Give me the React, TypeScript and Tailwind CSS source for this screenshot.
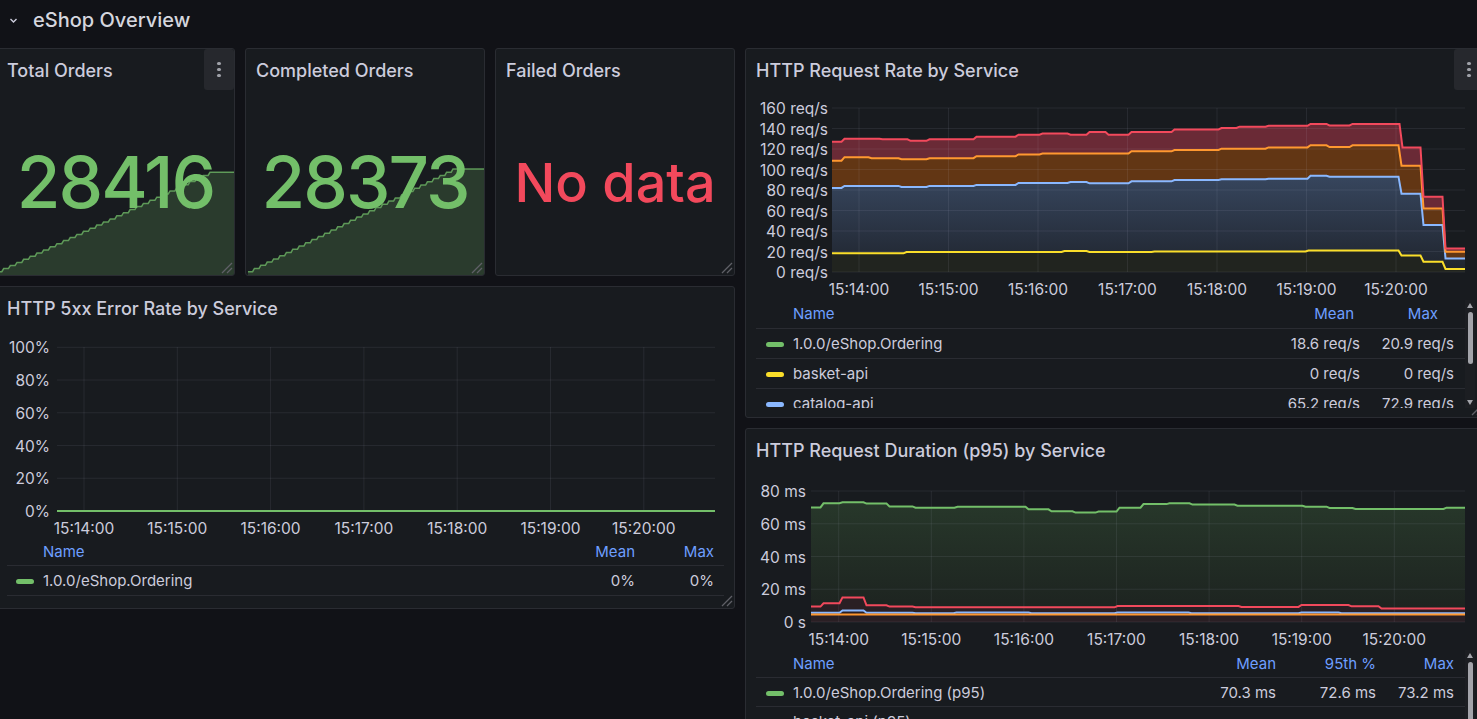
import React from "react";

const RED = "#f2495c";
const ORANGE = "#ff9830";
const BLUE = "#8ab8ff";
const YELLOW = "#fade2a";
const GREEN = "#73bf69";
const GRID = "rgba(204,204,220,0.09)";
const AXIS_FS = 15.5;

type Seg = [number, number];

// step-like line through breakpoints [x, value]
function stepLine(segs: Seg[], xEnd: number, toY: (v: number) => number, t = 1.5) {
    let d = "";
    segs.forEach(([x, v], i) => {
        const next = i < segs.length - 1 ? segs[i + 1][0] : xEnd;
        const y = toY(v).toFixed(1);
        const xa = i === 0 ? x : x + t;
        const xb = i === segs.length - 1 ? next : next - t;
        d += (i === 0 ? `M${xa},${y}` : ` L${xa},${y}`) + ` L${xb},${y}`;
    });
    return d;
}

function areaPath(segs: Seg[], xEnd: number, toY: (v: number) => number, base: number) {
    return stepLine(segs, xEnd, toY) + ` L${xEnd},${base} L${segs[0][0]},${base} Z`;
}

function sparkPath(xs: number, xr: number, yb: number, yt: number, n: number) {
    const dx = (xr - xs) / n;
    const dy = (yb - yt) / n;
    let d = `M${xs},${yb}`;
    for (let i = 0; i < n; i++) {
        const x = xs + i * dx;
        const y = yb - i * dy;
        d += ` L${(x + dx * 0.72).toFixed(1)},${y.toFixed(1)} L${(x + dx).toFixed(1)},${(y - dy).toFixed(1)}`;
    }
    return d;
}

function Dots() {
    return (
        <div className="absolute top-0 right-0 flex h-[41px] w-[30px] flex-col items-center justify-center gap-[2.5px] rounded-[3px] bg-[#26282d]">
            <span className="h-[3.5px] w-[3.5px] rounded-full bg-[#9fa1a8]" />
            <span className="h-[3.5px] w-[3.5px] rounded-full bg-[#9fa1a8]" />
            <span className="h-[3.5px] w-[3.5px] rounded-full bg-[#9fa1a8]" />
        </div>
    );
}

function ResizeHandle() {
    return (
        <svg className="absolute right-[1px] bottom-[1px]" width="12" height="12" viewBox="0 0 12 12">
            <path d="M11 1 L1 11 M11 6 L6 11" stroke="#5f6067" strokeWidth="1.3" fill="none" />
        </svg>
    );
}

function Panel({
    title,
    className,
    menu,
    handle = true,
    children,
}: {
    title: string;
    className: string;
    menu?: boolean;
    handle?: boolean;
    children: React.ReactNode;
}) {
    return (
        <div className={`relative flex shrink-0 flex-col overflow-hidden rounded-[3px] border border-[#2a2c32] bg-[#181b1f] ${className}`}>
            <div className="flex h-[41px] shrink-0 items-center px-[10px] pt-[2px] text-[18px] font-medium text-[#ccccdc]">{title}</div>
            {menu && <Dots />}
            {children}
            {handle && <ResizeHandle />}
        </div>
    );
}

function StatPanel({
    title,
    value,
    className,
    menu,
    spark,
}: {
    title: string;
    value: string;
    className: string;
    menu?: boolean;
    spark?: { vb: string; xs: number; xr: number; xe: number; yt: number };
}) {
    const noData = value === "No data";
    return (
        <Panel title={title} className={className} menu={menu}>
            <div className="relative flex flex-1 items-center justify-center">
                {spark && (
                    <svg className="absolute inset-0" width="100%" height="100%" viewBox={spark.vb} preserveAspectRatio="none">
                        <path
                            d={sparkPath(spark.xs, spark.xr, 271.7, spark.yt, 32) + ` L${spark.xe},${spark.yt} L${spark.xe},276 L${spark.xs},276 Z`}
                            fill="rgba(115,191,105,0.2)"
                        />
                        <path
                            d={sparkPath(spark.xs, spark.xr, 271.7, spark.yt, 32) + ` L${spark.xe},${spark.yt}`}
                            fill="none"
                            stroke={GREEN}
                            strokeOpacity="0.75"
                            strokeWidth="1.5"
                        />
                    </svg>
                )}
                <span
                    className={
                        noData
                            ? "relative text-[54px] leading-none font-medium text-[#f2495c]"
                            : "relative text-[71px] leading-none font-medium tracking-[-2px] text-[#73bf69]"
                    }
                >
                    {value}
                </span>
            </div>
        </Panel>
    );
}

function Swatch({ color }: { color: string }) {
    return <span className="block h-[5px] w-[18px] shrink-0 rounded-full" style={{ backgroundColor: color }} />;
}

function Scrollbar({ thumbTop, thumbH }: { thumbTop: number; thumbH: number }) {
    return (
        <div className="relative w-[10px] shrink-0 bg-[#1c1e22]">
            <svg className="absolute top-[3px] left-[2px]" width="6" height="5" viewBox="0 0 6 5">
                <path d="M3 0 L6 5 L0 5 Z" fill="#a3a4aa" />
            </svg>
            <div className="absolute left-[2.5px] w-[5.5px] rounded-full bg-[#a3a4aa]" style={{ top: thumbTop, height: thumbH }} />
            <svg className="absolute bottom-[3px] left-[2px]" width="6" height="5" viewBox="0 0 6 5">
                <path d="M0 0 L6 0 L3 5 Z" fill="#a3a4aa" />
            </svg>
        </div>
    );
}

function AxisText({ x, y, anchor, children }: { x: number; y: number; anchor: "end" | "middle"; children: React.ReactNode }) {
    return (
        <text x={x} y={y + 1.8} textAnchor={anchor} dominantBaseline="middle" fontSize={AXIS_FS} fill="#ccccdc">
            {children}
        </text>
    );
}

const rateY = (v: number) => 272 - v * 1.025;

const rateRed: Seg[] = [
    [832, 127], [843, 130], [881, 129.5], [909, 128], [928, 129.5], [975, 132], [1017, 134], [1041, 135],
    [1069, 134], [1088, 136.6], [1107, 134], [1130, 136.6], [1173, 139], [1220, 140.5], [1238, 141.8],
    [1267, 142.6], [1309, 144.5], [1328, 143], [1351, 144.5], [1401, 121.5], [1422, 73.5], [1444, 23],
];
const rateOrange: Seg[] = [
    [832, 108.6], [843, 112], [870, 111], [900, 110], [928, 111], [975, 113], [1017, 114.6], [1041, 115.5],
    [1130, 117.8], [1173, 119], [1220, 120.3], [1267, 121.6], [1309, 123.6], [1328, 122], [1351, 123.6],
    [1400, 103.7], [1422, 62], [1444, 19.8],
];
const rateBlue: Seg[] = [
    [832, 82], [843, 84], [900, 83], [928, 84], [975, 85], [1017, 86.8], [1069, 87.8], [1088, 86.5],
    [1130, 88.5], [1173, 89.8], [1220, 90.4], [1267, 91], [1309, 94], [1328, 93], [1400, 76.4], [1422, 45.8],
    [1444, 13.3],
];
const rateYellow: Seg[] = [
    [832, 18.2], [905, 19.5], [1063, 20.5], [1088, 19.5], [1153, 20], [1307, 21], [1400, 16], [1422, 10], [1444, 3],
];

const times = ["15:14:00", "15:15:00", "15:16:00", "15:17:00", "15:18:00", "15:19:00", "15:20:00"];

function RateChart() {
    const ticks = times.map((_, i) => 859 + i * 89.5);
    return (
        <svg width="738" height="210" viewBox="746 90 738 210" className="shrink-0">
            <defs>
                <linearGradient id="blueFill" gradientUnits="userSpaceOnUse" x1="0" y1="176" x2="0" y2="272">
                    <stop offset="0" stopColor="#37465e" />
                    <stop offset="1" stopColor="#1f242d" />
                </linearGradient>
            </defs>
            <path d={areaPath(rateRed, 1465, rateY, 272)} fill="#6a2a36" />
            <path d={areaPath(rateOrange, 1465, rateY, 272)} fill="#623614" />
            <path d={areaPath(rateBlue, 1465, rateY, 272)} fill="url(#blueFill)" />
            <path d={areaPath(rateYellow, 1465, rateY, 272)} fill="#21241f" />
            {[0, 20, 40, 60, 80, 100, 120, 140, 160].map((v) => (
                <g key={v}>
                    <line x1="832" x2="1465" y1={rateY(v)} y2={rateY(v)} stroke={GRID} />
                    <AxisText x={828} y={rateY(v)} anchor="end">
                        {v} req/s
                    </AxisText>
                </g>
            ))}
            {ticks.map((x, i) => (
                <g key={x}>
                    <line x1={x} x2={x} y1="108" y2="272" stroke={GRID} />
                    <AxisText x={x} y={289} anchor="middle">
                        {times[i]}
                    </AxisText>
                </g>
            ))}
            <path d={stepLine(rateYellow, 1465, rateY)} fill="none" stroke={YELLOW} strokeWidth="2" />
            <path d={stepLine(rateBlue, 1465, rateY)} fill="none" stroke={BLUE} strokeWidth="2" />
            <path d={stepLine(rateOrange, 1465, rateY)} fill="none" stroke={ORANGE} strokeWidth="2" />
            <path d={stepLine(rateRed, 1465, rateY)} fill="none" stroke={RED} strokeWidth="2" />
        </svg>
    );
}

const durY = (v: number) => 622 - v * 1.6375;

const durGreen: Seg[] = [
    [811, 70], [822, 72.5], [841, 73.1], [865, 72.3], [888, 70.6], [914, 69.8], [956, 70.4], [1027, 68.8],
    [1050, 67.6], [1074, 66.8], [1097, 67.4], [1118, 69.8], [1142, 72], [1168, 72.5], [1191, 71.7], [1236, 71],
    [1304, 70.4], [1328, 69.6], [1354, 69], [1445, 69.8],
];
const durRed: Seg[] = [
    [811, 9.4], [822, 11.4], [841, 15], [865, 10.2], [888, 9.4], [914, 9], [1116, 9.8], [1240, 9.2], [1300, 10.4],
    [1350, 9.6], [1380, 8.2],
];
const durBlue: Seg[] = [
    [811, 5.7], [841, 7], [865, 5.7], [914, 5.3], [955, 5.8], [1030, 5.3], [1116, 5.8], [1190, 5.3], [1300, 5.8],
    [1340, 5.3],
];
const durOrange: Seg[] = [[811, 4.5]];

function DurationChart() {
    const ticks = times.map((_, i) => 838.7 + i * 92.6);
    return (
        <svg width="738" height="180" viewBox="746 470 738 180" className="shrink-0">
            <defs>
                <linearGradient id="greenFill" gradientUnits="userSpaceOnUse" x1="0" y1="505" x2="0" y2="622">
                    <stop offset="0" stopColor="#27372a" />
                    <stop offset="1" stopColor="#1c211f" />
                </linearGradient>
            </defs>
            <path d={areaPath(durGreen, 1465, durY, 622)} fill="url(#greenFill)" />
            <path d={areaPath(durRed, 1465, durY, 622)} fill="#2a1f24" />
            {[0, 20, 40, 60, 80].map((v) => (
                <g key={v}>
                    <line x1="811" x2="1465" y1={durY(v)} y2={durY(v)} stroke={GRID} />
                    <AxisText x={806} y={durY(v)} anchor="end">
                        {v === 0 ? "0 s" : `${v} ms`}
                    </AxisText>
                </g>
            ))}
            {ticks.map((x, i) => (
                <g key={x}>
                    <line x1={x} x2={x} y1="491" y2="622" stroke={GRID} />
                    <AxisText x={x} y={639} anchor="middle">
                        {times[i]}
                    </AxisText>
                </g>
            ))}
            <path d={stepLine(durBlue, 1465, durY)} fill="none" stroke={BLUE} strokeWidth="2" />
            <path d={stepLine(durOrange, 1465, durY)} fill="none" stroke={ORANGE} strokeWidth="2" />
            <path d={stepLine(durRed, 1465, durY)} fill="none" stroke={RED} strokeWidth="2" />
            <path d={stepLine(durGreen, 1465, durY)} fill="none" stroke={GREEN} strokeWidth="2" />
        </svg>
    );
}

function ErrorChart() {
    const ticks = times.map((_, i) => 84 + i * 93.3);
    const y = (v: number) => 511 - v * 1.637;
    return (
        <svg width="737" height="212" viewBox="-3 328 737 212" className="shrink-0">
            {[0, 20, 40, 60, 80, 100].map((v) => (
                <g key={v}>
                    <line x1="57" x2="715" y1={y(v)} y2={y(v)} stroke={GRID} />
                    <AxisText x={50} y={y(v)} anchor="end">
                        {v}%
                    </AxisText>
                </g>
            ))}
            {ticks.map((x, i) => (
                <g key={x}>
                    <line x1={x} x2={x} y1="347" y2="511" stroke={GRID} />
                    <AxisText x={x} y={528} anchor="middle">
                        {times[i]}
                    </AxisText>
                </g>
            ))}
            <line x1="57" x2="715" y1="511" y2="511" stroke={GREEN} strokeWidth="2" />
        </svg>
    );
}

export default function App() {
    return (
        <div className="h-[719px] w-[1477px] overflow-hidden bg-[#111217] font-[Inter,sans-serif] text-[#ccccdc]">
            <div className="mb-[8px] flex h-[40px] items-center">
                <svg className="ml-[9px]" width="9" height="9" viewBox="0 0 9 9">
                    <path d="M1.5 3 L4.5 6 L7.5 3" fill="none" stroke="#ccccdc" strokeWidth="1.4" />
                </svg>
                <span className="ml-[15px] text-[20px] font-medium text-[#d5d6de]">eShop Overview</span>
            </div>

            <div className="ml-[-4px] flex gap-[10px]">
                <div className="flex w-[739px] shrink-0 flex-col gap-[10px]">
                    <div className="flex h-[228px] gap-[10px]">
                        <StatPanel
                            title="Total Orders"
                            value="28416"
                            className="w-[239px]"
                            menu
                            spark={{ vb: "-3 90 237 185", xs: -3, xr: 210, xe: 234, yt: 172.3 }}
                        />
                        <StatPanel
                            title="Completed Orders"
                            value="28373"
                            className="w-[240px]"
                            spark={{ vb: "246 90 238 185", xs: 248, xr: 453, xe: 484, yt: 169 }}
                        />
                        <StatPanel title="Failed Orders" value="No data" className="w-[240px]" />
                    </div>

                    <Panel title="HTTP 5xx Error Rate by Service" className="h-[323px]">
                        <ErrorChart />
                        <div className="px-[10px] text-[15px]">
                            <div className="flex h-[26px] items-center border-b border-[#2a2c32] pr-[10px] text-[#6e9fff]">
                                <span className="flex-1 pl-[36px]">Name</span>
                                <span className="w-[100px] text-right">Mean</span>
                                <span className="w-[79px] text-right">Max</span>
                            </div>
                            <div className="flex h-[30px] items-center border-b border-[#2a2c32] pt-[2px] pr-[10px]">
                                <span className="pl-[9px]">
                                    <Swatch color={GREEN} />
                                </span>
                                <span className="flex-1 pl-[9px]">1.0.0/eShop.Ordering</span>
                                <span className="w-[100px] text-right">0%</span>
                                <span className="w-[79px] text-right">0%</span>
                            </div>
                        </div>
                    </Panel>
                </div>

                <div className="flex w-[740px] shrink-0 flex-col gap-[10px]">
                    <Panel title="HTTP Request Rate by Service" className="h-[370px]" menu>
                        <RateChart />
                        <div className="flex h-[108px] pl-[10px] text-[15px]">
                            <div className="flex-1 overflow-hidden">
                                <div className="flex h-[29px] items-center border-b border-[#2a2c32] pt-[1px] text-[#6e9fff]">
                                    <span className="flex-1 pl-[37px]">Name</span>
                                    <span className="w-[100px] pr-[6px] text-right">Mean</span>
                                    <span className="w-[105px] pr-[27px] text-right">Max</span>
                                </div>
                                {[
                                    [GREEN, "1.0.0/eShop.Ordering", "18.6 req/s", "20.9 req/s"],
                                    [YELLOW, "basket-api", "0 req/s", "0 req/s"],
                                    [BLUE, "catalog-api", "65.2 req/s", "72.9 req/s"],
                                ].map(([c, n, mean, max]) => (
                                    <div key={n} className="flex h-[30px] shrink-0 items-center border-b border-[#2a2c32] pt-[2px]">
                                        <span className="pl-[10px]">
                                            <Swatch color={c} />
                                        </span>
                                        <span className="flex-1 pl-[9px]">{n}</span>
                                        <span className="w-[100px] text-right">{mean}</span>
                                        <span className="w-[105px] pr-[11px] text-right">{max}</span>
                                    </div>
                                ))}
                            </div>
                            <Scrollbar thumbTop={12} thumbH={52} />
                            <div className="w-[9px] shrink-0" />
                        </div>
                    </Panel>

                    <Panel title="HTTP Request Duration (p95) by Service" className="h-[300px]" handle={false}>
                        <DurationChart />
                        <div className="flex h-[120px] pl-[10px] text-[15px]">
                            <div className="flex-1 overflow-hidden">
                                <div className="flex h-[28px] items-center border-b border-[#2a2c32] pt-[1px] text-[#6e9fff]">
                                    <span className="flex-1 pl-[37px]">Name</span>
                                    <span className="w-[100px] text-right">Mean</span>
                                    <span className="w-[100px] text-right">95th %</span>
                                    <span className="w-[89px] pr-[11px] text-right">Max</span>
                                </div>
                                {[
                                    [GREEN, "1.0.0/eShop.Ordering (p95)", "70.3 ms", "72.6 ms", "73.2 ms"],
                                    [YELLOW, "basket-api (p95)", "", "", ""],
                                ].map(([c, n, a, b, m]) => (
                                    <div key={n} className="flex h-[29px] items-center border-b border-[#2a2c32] pt-[2px]">
                                        <span className="pl-[10px]">
                                            <Swatch color={c} />
                                        </span>
                                        <span className="flex-1 pl-[9px]">{n}</span>
                                        <span className="w-[100px] text-right">{a}</span>
                                        <span className="w-[100px] text-right">{b}</span>
                                        <span className="w-[89px] pr-[11px] text-right">{m}</span>
                                    </div>
                                ))}
                            </div>
                            <Scrollbar thumbTop={12} thumbH={60} />
                            <div className="w-[9px] shrink-0" />
                        </div>
                    </Panel>
                </div>
            </div>
        </div>
    );
}
